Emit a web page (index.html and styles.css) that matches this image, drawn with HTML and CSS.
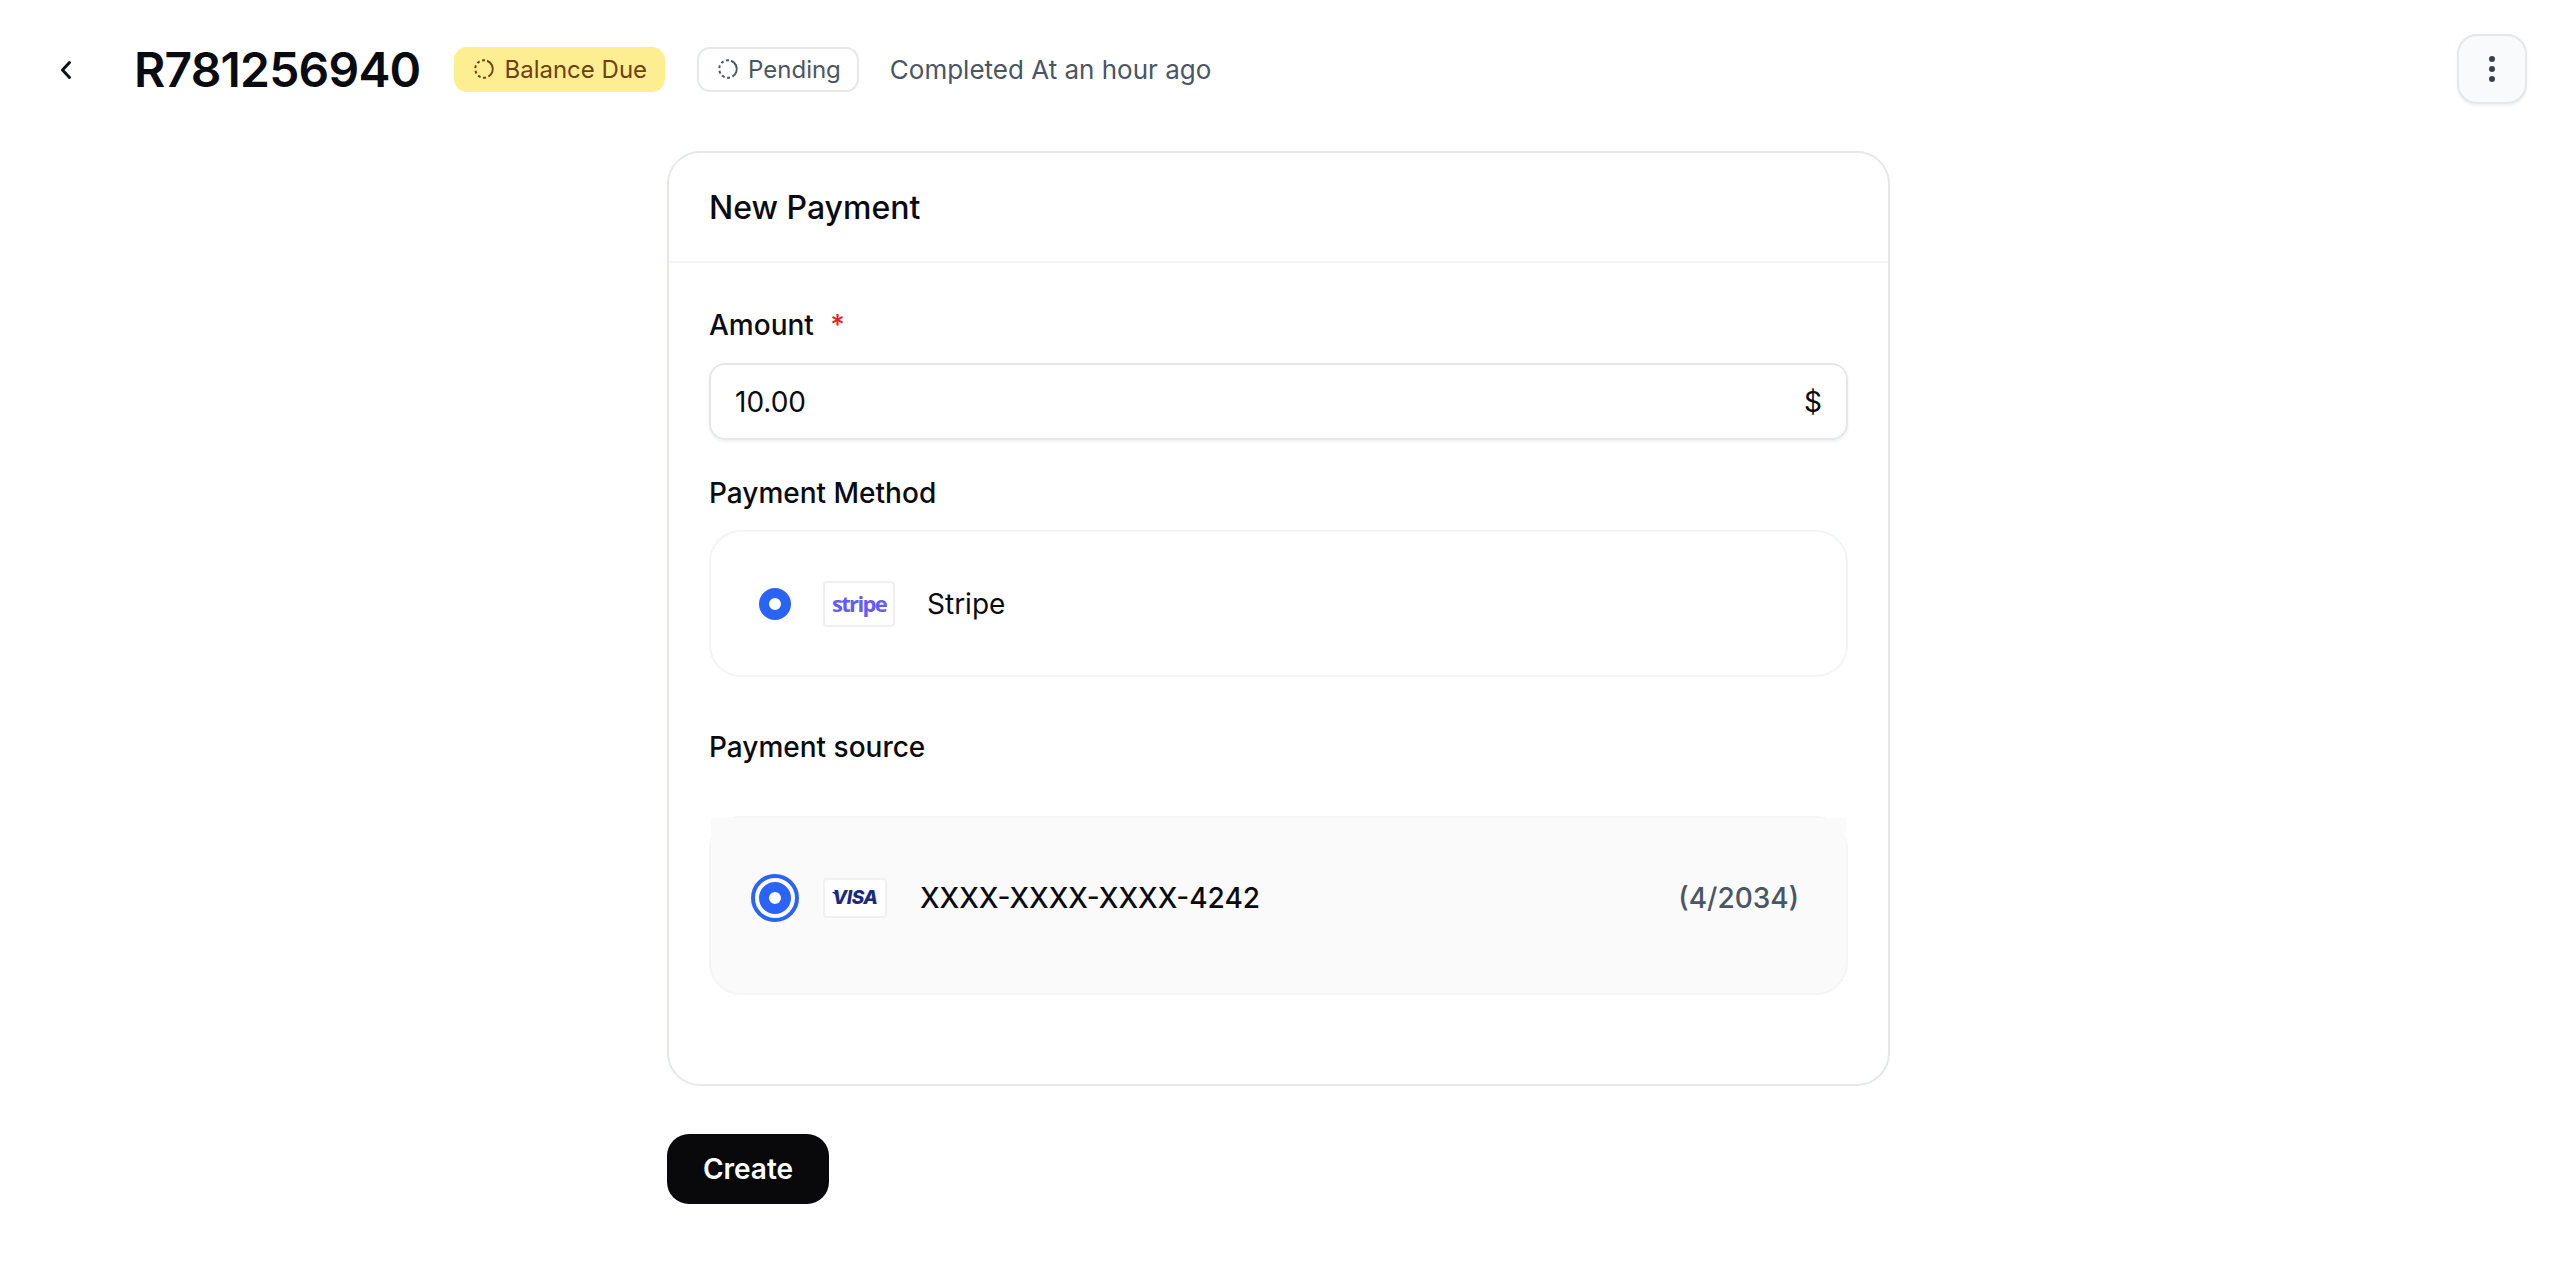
FILE: index.html
```html
<!DOCTYPE html>
<html lang="en">

<head>
    <meta charset="UTF-8">
    <title>R781256940 - New Payment</title>
    <link rel="stylesheet" href="styles.css">
</head>

<body>
    <header class="topbar">
        <button class="back-button" aria-label="Back">
            <svg width="32" height="32" viewBox="0 0 32 32" fill="none" stroke="#0f1115" stroke-width="3" stroke-linecap="round" stroke-linejoin="round"><path d="M19.5 9.500 L12.500 17 L19.500 24.500"/></svg>
        </button>
        <h1 class="order-number">R781256940</h1>
        <span class="badge badge-warning">
            <svg class="badge-icon" viewBox="0 0 20 20" fill="none" stroke="#713f12" stroke-width="1.800"><circle cx="10" cy="10" r="8" transform="rotate(-70 10 10)" stroke-dasharray="18 2.400 2.600 2.400 2.600 2.400 2.600 2.400 2.600 2.400 2.600 2.400 2.600 2.400"/></svg>
            Balance Due
        </span>
        <span class="badge badge-outline">
            <svg class="badge-icon" viewBox="0 0 20 20" fill="none" stroke="#4b5563" stroke-width="1.800"><circle cx="10" cy="10" r="8" transform="rotate(-70 10 10)" stroke-dasharray="18 2.400 2.600 2.400 2.600 2.400 2.600 2.400 2.600 2.400 2.600 2.400 2.600 2.400"/></svg>
            Pending
        </span>
        <span class="completed">Completed At an hour ago</span>
        <button class="menu-button" aria-label="More">
            <span class="dot"></span>
            <span class="dot"></span>
            <span class="dot"></span>
        </button>
    </header>

    <main class="content">
        <section class="card">
            <h2 class="card-title">New Payment</h2>
            <div class="card-body">
                <label class="field-label">Amount <span class="required">*</span></label>
                <div class="input">
                    <span>10.00</span>
                    <span>$</span>
                </div>

                <label class="field-label method-label">Payment Method</label>
                <div class="option-row">
                    <span class="radio"></span>
                    <span class="logo logo-stripe">stripe</span>
                    <span class="option-name">Stripe</span>
                </div>

                <label class="field-label source-label">Payment source</label>
                <div class="source-row">
                    <span class="radio-ring"><span class="radio"></span></span>
                    <span class="logo logo-visa">VISA</span>
                    <span class="card-number">XXXX-XXXX-XXXX-4242</span>
                    <span class="card-expiry">(4/2034)</span>
                </div>
            </div>
        </section>
        <button class="create-button">Create</button>
    </main>
</body>

</html>
```

FILE: styles.css
```css
/* Reset styles */
* {
    margin: 0;
    padding: 0;
    box-sizing: border-box;
}

body {
    font-family: Inter, "Noto Sans", sans-serif;
    color: #0a0b10;
    background: #fff;
    height: 100vh;
    overflow: hidden;
}

button {
    font-family: inherit;
    border: none;
    background: none;
}

/* Top bar */
.topbar {
    display: flex;
    align-items: center;
    height: 138px;
    padding: 0 29px 0 50px;
}

.back-button {
    display: flex;
    width: 32px;
    height: 32px;
    margin-right: 52px;
}

.order-number {
    font-size: 48px;
    font-weight: 600;
    letter-spacing: -0.8px;
    margin-right: 34px;
}

.badge {
    display: flex;
    align-items: center;
    gap: 9px;
    height: 45px;
    border-radius: 13px;
    font-size: 24px;
    font-weight: 400;
}

.badge-icon {
    width: 22px;
    height: 22px;
}

.badge-warning {
    background: #fdee92;
    color: #713f12;
    padding: 0 18px 0 19px;
    margin-right: 32px;
}

.badge-outline {
    border: 2px solid #e5e7eb;
    color: #4b5563;
    padding: 0 16px 0 18px;
    margin-right: 31px;
}

.completed {
    font-size: 26px;
    color: #4b5563;
}

.menu-button {
    display: flex;
    flex-direction: column;
    align-items: center;
    justify-content: center;
    gap: 4px;
    width: 70px;
    height: 70px;
    margin-left: auto;
    background: #f9fafb;
    border: 2px solid #e5e7eb;
    border-radius: 20px;
    box-shadow: 0 2px 3px rgba(0, 0, 0, 0.06);
}

.dot {
    width: 6px;
    height: 6px;
    border-radius: 50%;
    background: #374151;
}

/* Form card */
.content {
    width: 1223px;
    margin: 13px 0 0 667px;
}

.card {
    height: 935px;
    border: 2px solid #e5e7eb;
    border-radius: 33px;
}

.card-title {
    font-size: 32px;
    font-weight: 500;
    line-height: 40px;
    padding: 35px 40px 33px;
    border-bottom: 2px solid #f3f4f6;
}

.card-body {
    padding: 0 40px;
}

.field-label {
    display: block;
    font-size: 28px;
    font-weight: 500;
    line-height: 36px;
}

.card-body > .field-label:first-child {
    margin-top: 44px;
}

.required {
    color: #dc2626;
    margin-left: 9px;
}

.input {
    display: flex;
    justify-content: space-between;
    align-items: center;
    height: 77px;
    margin-top: 20px;
    padding: 0 24px;
    font-size: 28px;
    border: 2px solid #e5e7eb;
    border-radius: 16px;
    box-shadow: 0 2px 3px rgba(0, 0, 0, 0.06);
}

.method-label {
    margin-top: 35px;
}

.option-row {
    display: flex;
    align-items: center;
    height: 147px;
    margin-top: 19px;
    padding-left: 48px;
    border: 2px solid #f3f4f6;
    border-radius: 32px;
}

.radio {
    display: block;
    width: 32px;
    height: 32px;
    border-radius: 50%;
    border: 10px solid #2b63f6;
    background: #fff;
}

.logo {
    display: flex;
    align-items: center;
    justify-content: center;
    background: #fff;
    border: 2px solid #f0f0f2;
    border-radius: 4px;
}

.logo-stripe {
    width: 72px;
    height: 46px;
    margin-left: 32px;
    padding-bottom: 2px;
    color: #635bff;
    font-family: "Open Sans", sans-serif;
    font-size: 22px;
    font-weight: 700;
    letter-spacing: -1.700px;
}

.option-name {
    margin-left: 32px;
    font-size: 28px;
}

.source-label {
    margin-top: 52px;
}

.source-row {
    position: relative;
    display: flex;
    align-items: center;
    height: 179px;
    margin-top: 51px;
    padding: 0 47px 16px 40px;
    background: #fafafa;
    border: 2px solid #f5f5f6;
    border-radius: 32px;
}

/* the grey fill runs past the rounded top corners */
.source-row::before {
    content: "";
    position: absolute;
    top: 0;
    left: 0;
    right: 0;
    height: 32px;
    background: #fafafa;
}

.radio-ring {
    display: flex;
    align-items: center;
    justify-content: center;
    width: 48px;
    height: 48px;
    border: 4px solid #2b63f6;
    border-radius: 50%;
}

.logo-visa {
    position: relative;
    width: 64px;
    height: 40px;
    margin-left: 24px;
    color: #1a2a80;
    font-size: 19px;
    font-weight: 800;
    font-style: italic;
    letter-spacing: -0.500px;
}

.logo-visa::before {
    content: "";
    position: absolute;
    left: 6px;
    top: 12px;
    width: 7px;
    height: 5px;
    background: #1a2a80;
    clip-path: polygon(0 0, 100% 0, 100% 100%);
}

.card-number {
    margin-left: 33px;
    font-size: 28px;
    font-weight: 500;
}

.card-expiry {
    margin-left: auto;
    font-size: 28px;
    font-weight: 500;
    color: #4b5563;
}

.create-button {
    display: block;
    width: 162px;
    height: 70px;
    margin-top: 48px;
    background: #09090b;
    color: #fff;
    font-size: 28px;
    font-weight: 600;
    border-radius: 22px;
}
```
